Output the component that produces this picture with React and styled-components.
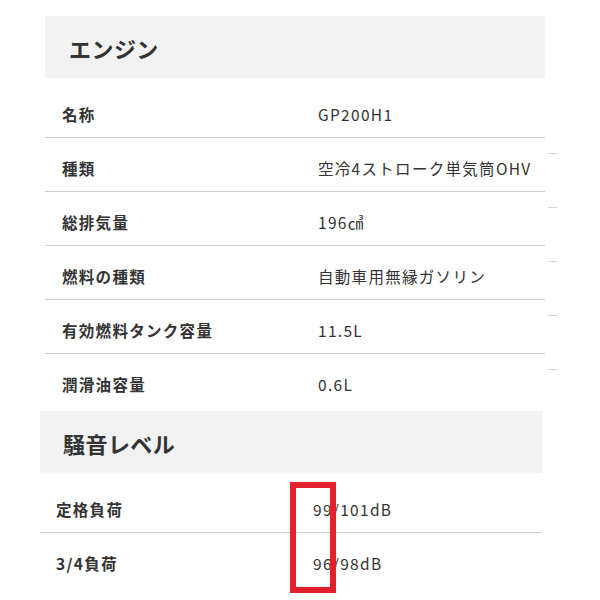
import styled, { createGlobalStyle } from "styled-components";

const engine = [
  ["名称", "GP200H1"],
  ["種類", "空冷4ストローク単気筒OHV"],
  ["総排気量", "196㎤"],
  ["燃料の種類", "自動車用無縁ガソリン"],
  ["有効燃料タンク容量", "11.5L"],
  ["潤滑油容量", "0.6L"],
];

const noise = [
  ["定格負荷", "99/101dB"],
  ["3/4負荷", "96/98dB"],
];

const App = () => {
  return (
    <Page>
      <GlobalStyle />
      <SectionRow>
        <Section $offset={45}>
          <Heading $indent={24}>エンジン</Heading>
          <Table>
            {engine.map(([label, value], i) => (
              <Row key={label} $last={i === engine.length - 1}>
                <Label $indent={17}>{label}</Label>
                <Value>{value}</Value>
              </Row>
            ))}
          </Table>
        </Section>
        <Ticks>
          {engine.slice(1).map(([label]) => (
            <Tick key={label} />
          ))}
        </Ticks>
      </SectionRow>
      <Section $offset={40} $width={502} $gap={3}>
        <Heading $indent={23}>騒音レベル</Heading>
        <Table>
          {noise.map(([label, value], i) => (
            <Row key={label} $last={i === noise.length - 1}>
              <Label $indent={16}>{label}</Label>
              <Value>{value}</Value>
            </Row>
          ))}
        </Table>
        <Highlight />
      </Section>
    </Page>
  );
};

export default App;

const GlobalStyle = createGlobalStyle`
  body {
    margin: 0;
    background: #fff;
    font-family: "Noto Sans CJK JP", "Noto Sans", sans-serif;
    color: #333;
  }
`;

const Page = styled.div`
  min-height: 600px;
  padding-top: 16px;
  box-sizing: border-box;
  display: flex;
  flex-direction: column;
`;

const SectionRow = styled.div`
  display: flex;
  align-items: flex-start;
`;

const Section = styled.section`
  position: relative;
  margin-left: ${(p) => p.$offset}px;
  margin-top: ${(p) => p.$gap || 0}px;
  width: ${(p) => p.$width || 500}px;
`;

const Heading = styled.h2`
  margin: 0;
  height: 62px;
  display: flex;
  align-items: center;
  padding-left: ${(p) => p.$indent}px;
  padding-top: 2px;
  box-sizing: border-box;
  background: #f2f2f2;
  font-size: 22px;
  font-weight: 700;
  letter-spacing: 0.02em;
  color: #333;
`;

const Table = styled.div`
  margin-top: 6px;
  display: flex;
  flex-direction: column;
`;

const Row = styled.div`
  display: grid;
  grid-template-columns: 273px 1fr;
  height: 54px;
  box-sizing: border-box;
  padding-top: 19px;
  border-bottom: ${(p) => (p.$last ? "none" : "1px solid #cfcfcf")};
  font-size: 15.5px;
  line-height: 22px;
  letter-spacing: 1.3px;
`;

const Label = styled.div`
  padding-left: ${(p) => p.$indent}px;
  font-weight: 700;
  color: #333;
`;

const Value = styled.div`
  font-weight: 400;
  color: #333;
`;

const Ticks = styled.div`
  display: flex;
  flex-direction: column;
  gap: 53px;
  margin-left: 3px;
  padding-top: 137px;
`;

const Tick = styled.div`
  width: 9px;
  height: 1px;
  background: #d6d6d6;
`;

const Highlight = styled.div`
  position: absolute;
  left: 250px;
  top: 71px;
  width: 46px;
  height: 111px;
  box-sizing: border-box;
  border: 6px solid #e3212b;
`;
